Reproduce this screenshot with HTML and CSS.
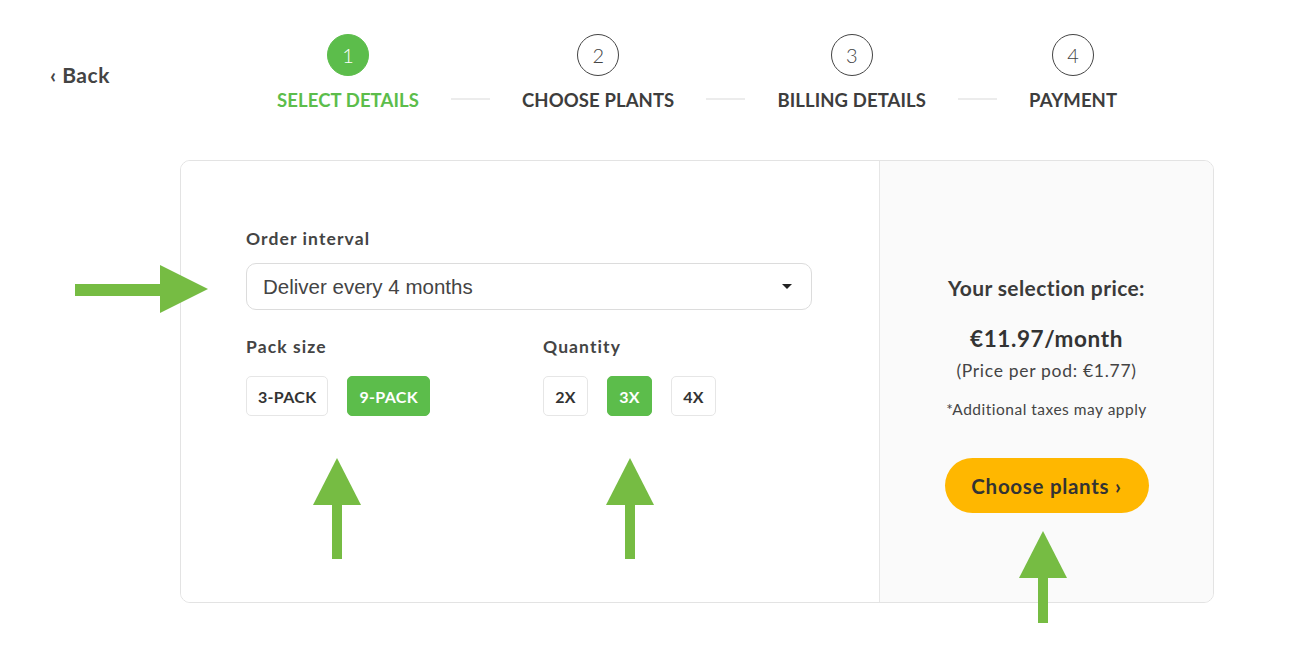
FILE: index.html
```html
<!DOCTYPE html>
<html>
<head>
<meta charset="utf-8">
<link rel="stylesheet" href="styles.css">
</head>
<body>
<div class="page">
  <header class="header">
    <a class="back">‹ Back</a>
    <nav class="steps">
      <div class="step active"><span class="circle">1</span><span class="label">SELECT DETAILS</span></div>
      <span class="connector"></span>
      <div class="step"><span class="circle">2</span><span class="label">CHOOSE PLANTS</span></div>
      <span class="connector"></span>
      <div class="step"><span class="circle">3</span><span class="label">BILLING DETAILS</span></div>
      <span class="connector"></span>
      <div class="step"><span class="circle">4</span><span class="label">PAYMENT</span></div>
    </nav>
  </header>

  <main class="card">
    <section class="options">
      <div class="field-label">Order interval</div>
      <div class="select">
        <span>Deliver every 4 months</span>
        <svg class="caret" width="10" height="6" viewBox="0 0 10 6"><path d="M0 0 L10 0 L5 5 Z" fill="#222"/></svg>
      </div>
      <div class="groups">
        <div class="group pack">
          <div class="field-label">Pack size</div>
          <div class="choices">
            <span class="choice">3-PACK</span>
            <span class="choice selected">9-PACK</span>
          </div>
        </div>
        <div class="group">
          <div class="field-label">Quantity</div>
          <div class="choices">
            <span class="choice sq">2X</span>
            <span class="choice sq selected">3X</span>
            <span class="choice sq">4X</span>
          </div>
        </div>
      </div>
    </section>
    <aside class="summary">
      <div class="sum-title">Your selection price:</div>
      <div class="sum-price">€11.97/month</div>
      <div class="sum-pod">(Price per pod: €1.77)</div>
      <div class="sum-note">*Additional taxes may apply</div>
      <button class="cta">Choose plants ›</button>
    </aside>
  </main>

  <svg class="annotations" width="1311" height="650" viewBox="0 0 1311 650">
    <g fill="#76bc43">
      <rect x="75" y="284" width="88" height="12"/>
      <polygon points="160,265 208,289 160,313"/>
      <polygon points="337,458 361,505 313,505"/>
      <rect x="332" y="503" width="10" height="56"/>
      <polygon points="630,458 654,505 606,505"/>
      <rect x="625" y="503" width="10" height="56"/>
      <polygon points="1043,531 1067,578 1019,578"/>
      <rect x="1038" y="576" width="10" height="47"/>
    </g>
  </svg>
</div>
</body>
</html>
```

FILE: styles.css
```css
html, body {
  margin: 0;
  padding: 0;
  background: #fff;
}
body {
  font-family: "Lato", "Open Sans", sans-serif;
  color: #3d3d3d;
}
.page {
  position: relative;
  width: 1311px;
  height: 650px;
  overflow: hidden;
}
.header {
  display: flex;
  align-items: flex-start;
  padding-top: 34px;
}
.back {
  margin-left: 50px;
  margin-top: 29px;
  width: 227px;
  font-size: 21px;
  font-weight: 700;
  letter-spacing: 0.5px;
  color: #444;
  line-height: 24px;
}
.steps {
  display: flex;
  align-items: flex-end;
  gap: 32px;
}
.step {
  display: flex;
  flex-direction: column;
  align-items: center;
  gap: 13px;
}
.circle {
  width: 40px;
  height: 40px;
  border: 1.5px solid #444;
  border-radius: 50%;
  display: flex;
  align-items: center;
  justify-content: center;
  font-size: 20px;
  font-weight: 300;
  color: #444;
}
.step.active .circle {
  background: #5cbd4b;
  border-color: #5cbd4b;
  color: #fff;
}
.label {
  font-size: 18.5px;
  font-weight: 700;
  line-height: 22px;
  color: #3d3d3d;
  letter-spacing: 0.1px;
  white-space: nowrap;
}
.step.active .label {
  color: #5cbd4b;
}
.connector {
  width: 39px;
  height: 2px;
  background: #ececec;
  margin-bottom: 11px;
}
.card {
  display: flex;
  margin: 49px 0 0 180px;
  width: 1034px;
  height: 443px;
  border: 1px solid #e3e3e3;
  border-radius: 10px;
  overflow: hidden;
  box-sizing: border-box;
}
.options {
  width: 699px;
  box-sizing: border-box;
  padding: 68px 0 0 65px;
  background: #fff;
  border-right: 1px solid #e6e6e6;
}
.field-label {
  font-size: 17.5px;
  font-weight: 700;
  letter-spacing: 1.1px;
  color: #444;
  line-height: 20px;
}
.select {
  margin-top: 14px;
  width: 566px;
  height: 47px;
  box-sizing: border-box;
  border: 1px solid #dcdcdc;
  border-radius: 10px;
  display: flex;
  align-items: center;
  justify-content: space-between;
  padding: 0 19px 0 16px;
  font-family: "Liberation Sans", Arial, sans-serif;
  font-size: 20.5px;
  color: #444;
}
.groups {
  display: flex;
  margin-top: 27px;
}
.group.pack {
  width: 297px;
}
.choices {
  display: flex;
  gap: 19px;
  margin-top: 19px;
}
.choice {
  height: 40px;
  box-sizing: border-box;
  padding: 0 11px;
  display: flex;
  align-items: center;
  border: 1px solid #e6e6e6;
  border-radius: 5px;
  font-size: 16px;
  font-weight: 700;
  letter-spacing: 0.3px;
  color: #333;
  background: #fff;
}
.choice.sq {
  width: 45px;
  justify-content: center;
  padding: 0;
}
.choice.selected {
  background: #5cbd4b;
  border-color: #5cbd4b;
  color: #fff;
}
.summary {
  flex: 1;
  background: #fafafa;
  display: flex;
  flex-direction: column;
  align-items: center;
  padding-top: 115px;
}
.sum-title {
  font-size: 21px;
  font-weight: 700;
  letter-spacing: 0.4px;
  color: #3a3a3a;
  line-height: 24px;
}
.sum-price {
  margin-top: 26px;
  font-size: 22.5px;
  font-weight: 700;
  letter-spacing: 0.6px;
  color: #333;
  line-height: 26px;
}
.sum-pod {
  margin-top: 9px;
  font-size: 17.5px;
  letter-spacing: 0.7px;
  color: #444;
  line-height: 20px;
}
.sum-note {
  margin-top: 19px;
  font-size: 15.5px;
  letter-spacing: 0.5px;
  color: #444;
  line-height: 18px;
}
.cta {
  margin-top: 40px;
  width: 204px;
  height: 55px;
  border: none;
  border-radius: 28px;
  background: #ffb700;
  font-family: "Lato", sans-serif;
  font-size: 20.5px;
  font-weight: 700;
  letter-spacing: 0.7px;
  color: #333;
}
.annotations {
  position: absolute;
  left: 0;
  top: 0;
  pointer-events: none;
}
```
